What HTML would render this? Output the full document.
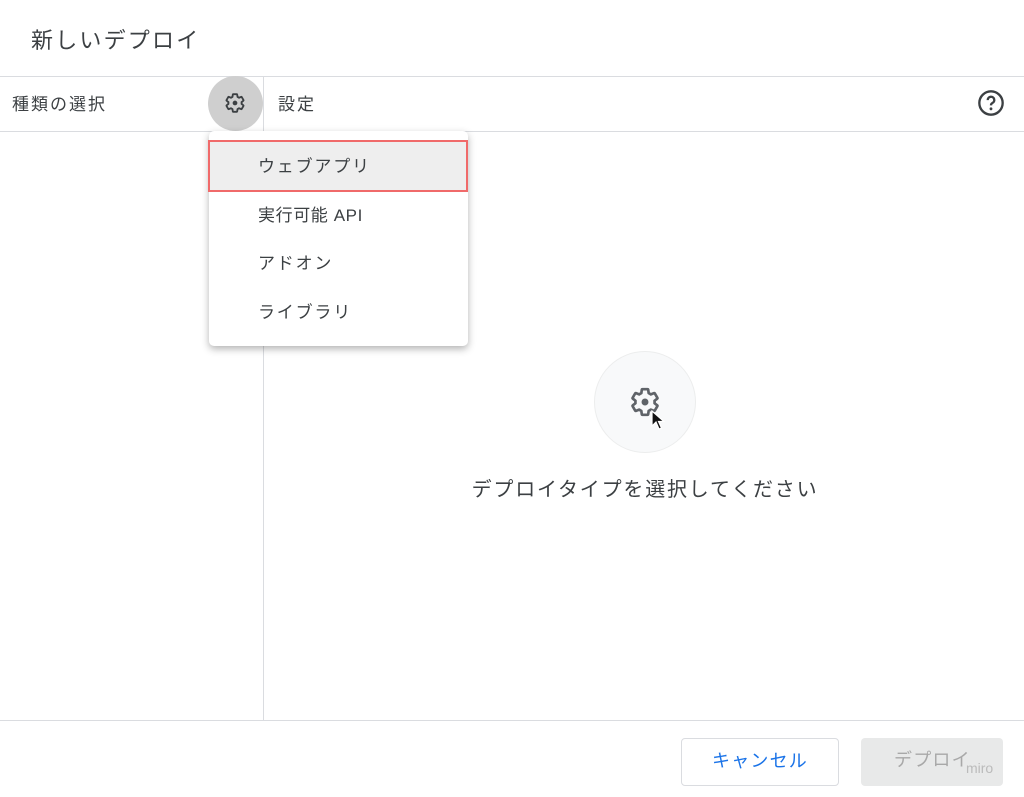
<!DOCTYPE html>
<html><head><meta charset="utf-8"><style>
*{margin:0;padding:0;box-sizing:border-box}
body{width:1024px;height:797px;background:#fff;font-family:"Liberation Sans","Noto Sans CJK JP",sans-serif;color:#3c4043;position:relative;overflow:hidden}
.a{position:absolute}
</style></head><body>
<div class="a" style="left:31px;top:23px;font-size:22px;letter-spacing:2.2px;color:#3c4043">新しいデプロイ</div>
<div class="a" style="left:0;top:76px;width:1024px;height:1px;background:#dadce0"></div>
<div class="a" style="left:0;top:131px;width:1024px;height:1px;background:#dadce0"></div>
<div class="a" style="left:263px;top:77px;width:1px;height:643px;background:#dadce0"></div>
<div class="a" style="left:0;top:720px;width:1024px;height:1px;background:#dadce0"></div>
<div class="a" style="left:12px;top:90px;font-size:17px;letter-spacing:2px">種類の選択</div>
<div class="a" style="left:278px;top:90px;font-size:17px;letter-spacing:2px">設定</div>
<div class="a" style="left:208px;top:76px;width:55px;height:55px;border-radius:50%;background:#cfcfcf"></div>
<svg class="a" style="left:224px;top:92px" width="22" height="22" viewBox="0 0 24 24"><path fill="none" stroke="#3c4043" stroke-width="2" stroke-linejoin="round" d="M19.14 12.94c.04-.3.06-.61.06-.94s-.02-.64-.07-.94l2.03-1.58a.49.49 0 0 0 .12-.61l-1.92-3.32a.488.488 0 0 0-.59-.22l-2.39.96c-.5-.38-1.03-.7-1.62-.94l-.36-2.54a.484.484 0 0 0-.48-.41h-3.84c-.24 0-.43.17-.47.41l-.36 2.54c-.59.24-1.130.57-1.62.94l-2.39-.96c-.22-.08-.47 0-.59.22L2.74 8.87c-.12.21-.08.47.12.61l2.03 1.58c-.05.3-.09.63-.09.94s.02.64.07.94l-2.03 1.58a.49.49 0 0 0-.12.61l1.92 3.32c.12.22.37.29.59.22l2.39-.96c.5.38 1.03.7 1.62.94l.36 2.54c.05.24.24.41.48.41h3.840c.24 0 .44-.17.47-.41l.36-2.54c.59-.24 1.13-.56 1.62-.94l2.39.96c.22.08.47 0 .59-.22l1.92-3.32c.12-.22.07-.47-.12-.61z"/><circle cx="12" cy="12" r="2.6" fill="#3c4043"/></svg>
<svg class="a" style="left:977px;top:89px" width="28" height="28" viewBox="0 0 24 24"><circle cx="12" cy="12" r="10" fill="none" stroke="#3c4043" stroke-width="2"/><path d="M9.2 9.5a2.8 2.8 0 1 1 4 2.5c-.8.4-1.2 1-1.2 2" fill="none" stroke="#3c4043" stroke-width="2"/><circle cx="12" cy="17" r="1.2" fill="#3c4043"/></svg>
<div class="a" style="left:209px;top:131px;width:259px;height:215px;background:#fff;border-radius:5px;box-shadow:0 3px 8px rgba(0,0,0,.3)"></div>
<div class="a" style="left:208px;top:140px;width:260px;height:52px;background:#eee;border:2px solid #f06a6a"></div>
<div class="a" style="left:258px;top:152px;font-size:17px;letter-spacing:1.8px">ウェブアプリ</div>
<div class="a" style="left:258px;top:201px;font-size:17px;letter-spacing:0.6px">実行可能 API</div>
<div class="a" style="left:258px;top:249px;font-size:17px;letter-spacing:1.8px">アドオン</div>
<div class="a" style="left:258px;top:298px;font-size:17px;letter-spacing:1.8px">ライブラリ</div>
<div class="a" style="left:594px;top:351px;width:102px;height:102px;border-radius:50%;background:#f8f9fa;border:1px solid #eceded"></div>
<svg class="a" style="left:629px;top:386px" width="32" height="32" viewBox="0 0 24 24"><path fill="none" stroke="#5f6368" stroke-width="2" stroke-linejoin="round" d="M19.14 12.94c.04-.3.06-.61.06-.94s-.02-.64-.07-.94l2.03-1.58a.49.49 0 0 0 .12-.61l-1.92-3.32a.488.488 0 0 0-.59-.22l-2.39.96c-.5-.38-1.03-.7-1.62-.94l-.36-2.54a.484.484 0 0 0-.48-.41h-3.84c-.24 0-.43.17-.47.41l-.36 2.54c-.59.24-1.13.57-1.62.94l-2.39-.96c-.22-.08-.47 0-.59.22L2.74 8.87c-.12.21-.08.47.12.61l2.03 1.58c-.05.3-.09.63-.09.94s.02.64.07.94l-2.03 1.58a.49.49 0 0 0-.12.61l1.92 3.32c.12.22.37.29.59.22l2.39-.96c.5.38 1.03.7 1.62.94l.36 2.54c.05.24.24.41.48.41h3.84c.24 0 .44-.17.47-.41l.36-2.54c.59-.24 1.13-.56 1.62-.94l2.39.96c.22.08.47 0 .59-.22l1.92-3.32c.12-.22.07-.47-.12-.61z"/><circle cx="12" cy="12" r="2.6" fill="#5f6368"/></svg>
<svg class="a" style="left:651px;top:410px" width="16" height="22" viewBox="0 0 16 22"><path d="M1 1v15l4-4 3 7 2.5-1-3-6.5h5.5z" fill="#111" stroke="#fff" stroke-width="1.2"/></svg>
<div class="a" style="left:395px;top:473px;width:500px;text-align:center;font-size:20px;letter-spacing:1.8px">デプロイタイプを選択してください</div>
<div class="a" style="left:681px;top:738px;width:158px;height:48px;border:1px solid #dadce0;border-radius:4px;color:#1a73e8;font-size:18px;letter-spacing:1.2px;text-align:center;line-height:44px">キャンセル</div>
<div class="a" style="left:861px;top:738px;width:142px;height:48px;background:#e8e9e9;border-radius:4px;color:#a8a8a8;font-size:18px;letter-spacing:1.2px;line-height:44px;padding-left:33px">デプロイ</div>
<div class="a" style="left:966px;top:760px;font-size:14px;color:#bbb">miro</div>
</body></html>
